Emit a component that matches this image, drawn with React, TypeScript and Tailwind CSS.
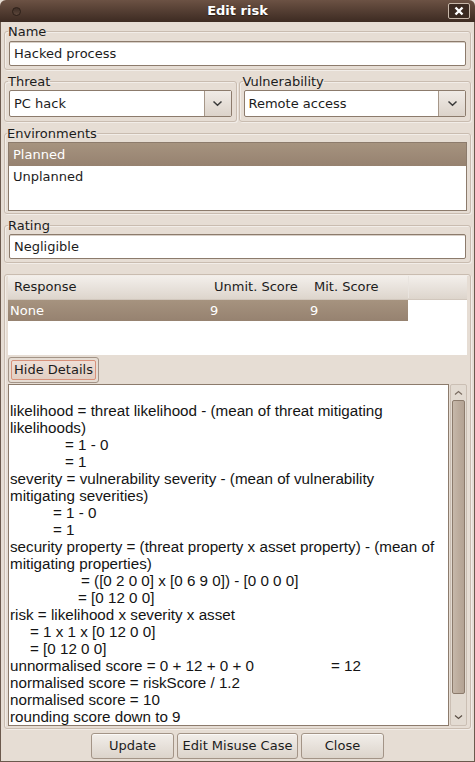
import React from "react";

const ui = "font-['DejaVu_Sans',Verdana,sans-serif] text-[13px] text-[#1c1c1c]";

function Group({
  label,
  className = "",
  children,
}: {
  label?: string;
  className?: string;
  children: React.ReactNode;
}) {
  return (
    <fieldset
      className={`min-w-0 rounded-[3px] border border-[#c9bcb0] shadow-[inset_1px_1px_0_#f2ede8,1px_1px_0_#f2ede8] ${className}`}
    >
      {label && <legend className="-ml-[1px] h-[15px] px-0 leading-[15px]">{label}</legend>}
      {children}
    </fieldset>
  );
}

function Field({ value, className = "" }: { value: string; className?: string }) {
  return (
    <div
      className={`flex h-[25px] items-center rounded-[2px] border border-[#8c7b6c] bg-white px-[4px] shadow-[inset_0_1px_0_#d8d0c8] ${className}`}
    >
      {value}
    </div>
  );
}

function Chevron() {
  return (
    <svg width="11" height="7" viewBox="0 0 11 7" fill="none">
      <path d="M1.5 1.5 L5.5 5.2 L9.5 1.5" stroke="#3a3a3a" strokeWidth="1.5" />
    </svg>
  );
}

function Combo({ value }: { value: string }) {
  return (
    <div className="mt-[1px] flex h-[27px] rounded-[2px] border border-[#8c7b6c] bg-white">
      <div className="flex flex-1 items-center px-[4px]">{value}</div>
      <div className="flex w-[27px] items-center justify-center border-l border-[#a69789] bg-gradient-to-b from-[#f0ebe6] to-[#dcd3ca]">
        <Chevron />
      </div>
    </div>
  );
}

function Button({ label, className = "" }: { label: string; className?: string }) {
  return (
    <div
      className={`flex h-[26px] items-center justify-center rounded-[3px] border border-[#a39487] bg-gradient-to-b from-[#f2eeea] to-[#dcd4cb] shadow-[inset_0_1px_0_#fbf9f7] ${className}`}
    >
      {label}
    </div>
  );
}

const details: { text: string; indent: string }[] = [
  { text: "\u00a0", indent: "" },
  { text: "likelihood = threat likelihood - (mean of threat mitigating", indent: "" },
  { text: "likelihoods)", indent: "" },
  { text: "= 1 - 0", indent: "pl-[56px]" },
  { text: "= 1", indent: "pl-[56px]" },
  { text: "severity = vulnerability severity - (mean of vulnerability", indent: "" },
  { text: "mitigating severities)", indent: "" },
  { text: "= 1 - 0", indent: "pl-[44px]" },
  { text: "= 1", indent: "pl-[44px]" },
  { text: "security property = (threat property x asset property) - (mean of", indent: "" },
  { text: "mitigating properties)", indent: "" },
  { text: "= ([0 2 0 0] x [0 6 9 0]) - [0 0 0 0]", indent: "pl-[72px]" },
  { text: "= [0 12 0 0]", indent: "pl-[69px]" },
  { text: "risk = likelihood x severity x asset", indent: "" },
  { text: "= 1 x 1 x [0 12 0 0]", indent: "pl-[21px]" },
  { text: "= [0 12 0 0]", indent: "pl-[21px]" },
  { text: "unnormalised score = 0 + 12 + 0 + 0", indent: "" },
  { text: "normalised score = riskScore / 1.2", indent: "" },
  { text: "normalised score = 10", indent: "" },
  { text: "rounding score down to 9", indent: "" },
];

export default function App() {
  return (
    <div className={`${ui} flex h-[762px] w-[475px] flex-col overflow-hidden bg-[#e6ddd4]`}>
      {/* title bar */}
      <div className="flex h-[22px] shrink-0 items-center rounded-t-[6px] bg-gradient-to-b from-[#6c5244] to-[#3d2b22]">
        <div className="flex w-[60px] pl-[12px]">
          <div className="h-[9px] w-[9px] rounded-full border border-[#2c1f18] bg-gradient-to-b from-[#3d2d25] to-[#5e483c]" />
        </div>
        <div className="flex-1 text-center font-bold leading-[22px] text-white [text-shadow:0_1px_1px_#2a1d16]">
          Edit risk
        </div>
        <div className="flex w-[60px] justify-end pr-[5px]">
          <div className="flex h-[16px] w-[22px] items-center justify-center rounded-[2px] border border-[#c9b9ab] bg-[#3b2a21]">
            <svg width="10" height="10" viewBox="0 0 10 10">
              <path d="M1.5 1.5 L8.5 8.5 M8.5 1.5 L1.5 8.5" stroke="#ffffff" strokeWidth="2.4" />
            </svg>
          </div>
        </div>
      </div>

      {/* body */}
      <div className="flex flex-1 flex-col border-x border-b border-[#6b594d] px-[3px]">
        <Group label="Name" className="mt-[2px] px-[4px] pb-[3px]">
          <Field value="Hacked process" className="mt-[2px]" />
        </Group>

        <div className="mt-[4px] flex gap-[2px]">
          <Group label="Threat" className="flex-1 px-[4px] pb-[4px]">
            <Combo value="PC hack" />
          </Group>
          <Group label="Vulnerability" className="flex-1 px-[4px] pb-[4px]">
            <Combo value="Remote access" />
          </Group>
        </div>

        <Group label="Environments" className="mt-[4px] px-[3px] pb-[2px]">
          <div className="mt-[1px] h-[69px] border border-[#8c7b6c] bg-white">
            <div className="flex h-[23px] items-center bg-gradient-to-b from-[#a6937f] to-[#968270] px-[4px] text-white">
              Planned
            </div>
            <div className="flex h-[22px] items-center px-[4px]">Unplanned</div>
          </div>
        </Group>

        <Group label="Rating" className="mt-[4px] px-[4px] pb-[3px]">
          <Field value="Negligible" className="mt-[1px]" />
        </Group>

        <Group className="mt-[11px] flex flex-col px-[3px] pb-[2px] pt-[1px]">
          <div className="h-[79px] bg-white">
            <div className="flex h-[24px] items-center border-b border-[#d1c7bd] bg-gradient-to-b from-[#f3efeb] via-[#e8e2dc] to-[#ddd5cc] pb-[1px]">
              <div className="w-[200px] pl-[6px]">Response</div>
              <div className="w-[100px] pl-[6px]">Unmit. Score</div>
              <div className="w-[100px] pl-[6px]">Mit. Score</div>
              <div className="h-full flex-1 border-l border-[#e9e4df]" />
            </div>
            <div className="flex h-[21px] w-[400px] items-center bg-gradient-to-b from-[#a6937f] to-[#968270] text-white">
              <div className="w-[200px] pl-[2px]">None</div>
              <div className="w-[100px] pl-[2px]">9</div>
              <div className="w-[100px] pl-[2px]">9</div>
            </div>
          </div>

          <div className="mt-[2px] flex">
            <div className="flex h-[26px] w-[91px] items-center justify-center rounded-[3px] border border-[#a39487] bg-[#e6ddd4] p-[2px]">
              <div className="flex h-full w-full items-center justify-center rounded-[2px] border border-[#d8917a] bg-gradient-to-b from-[#eedfd6] to-[#e2cfc3]">
                Hide Details
              </div>
            </div>
          </div>

          <div className="mt-[1px] flex h-[342px] gap-[1px]">
            <div className="flex-1 overflow-hidden border border-[#8c7b6c] bg-white font-['Liberation_Sans',Arial,sans-serif] text-[15.2px] leading-[17px] text-[#141414]">
              {details.map((l, i) =>
                l.text.startsWith("unnormalised") ? (
                  <div key={i} className="flex whitespace-nowrap pl-[1px]">
                    <span className="w-[321px]">{l.text}</span>
                    <span>= 12</span>
                  </div>
                ) : (
                  <div key={i} className={`whitespace-nowrap pl-[1px] ${l.indent}`}>
                    {l.text}
                  </div>
                )
              )}
            </div>
            <div className="flex w-[17px] flex-col rounded-[2px] border border-[#cbbfb4] bg-[#e3dbd2]">
              <div className="flex h-[15px] items-center justify-center">
                <svg width="9" height="6" viewBox="0 0 9 6">
                  <path d="M1 4.5 L4.5 1.5 L8 4.5" stroke="#7a6d62" strokeWidth="1.2" fill="none" />
                </svg>
              </div>
              <div className="mx-[1px] h-[294px] rounded-[2px] border border-[#8c7b6c] bg-gradient-to-r from-[#c6b8aa] via-[#bcac9d] to-[#b4a394]" />
              <div className="flex flex-1 items-end justify-center pb-[5px]">
                <svg width="9" height="6" viewBox="0 0 9 6">
                  <path d="M1 1.5 L4.5 4.5 L8 1.5" stroke="#5a4e45" strokeWidth="1.2" fill="none" />
                </svg>
              </div>
            </div>
          </div>
        </Group>

        <div className="mt-[4px] flex justify-center gap-[3px]">
          <Button label="Update" className="w-[83px]" />
          <Button label="Edit Misuse Case" className="w-[121px]" />
          <Button label="Close" className="w-[83px]" />
        </div>
      </div>
    </div>
  );
}
